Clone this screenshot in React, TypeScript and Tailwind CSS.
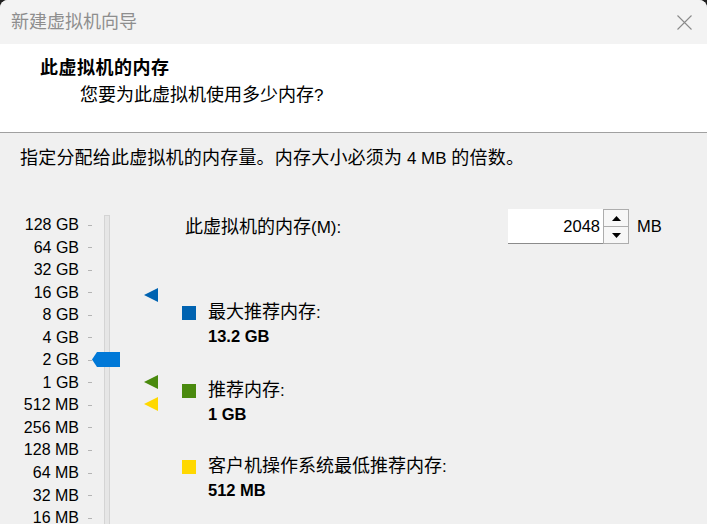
const labels = [
  "128 GB",
  "64 GB",
  "32 GB",
  "16 GB",
  "8 GB",
  "4 GB",
  "2 GB",
  "1 GB",
  "512 MB",
  "256 MB",
  "128 MB",
  "64 MB",
  "32 MB",
  "16 MB",
];

function Marker({ color, className }: { color: string; className: string }) {
  return (
    <svg width="14" height="14" viewBox="0 0 14 14" className={className}>
      <polygon points="0,7 14,0 14,14" fill={color} />
    </svg>
  );
}

function LegendItem({
  color,
  title,
  value,
  className,
}: {
  color: string;
  title: string;
  value: string;
  className?: string;
}) {
  return (
    <div className={`flex ${className ?? ""}`}>
      <div className="mt-[6px] w-[14px] h-[14px] shrink-0" style={{ background: color }} />
      <div className="ml-[12px] flex flex-col">
        <div className="leading-[24px] h-[24px]">
          <span className="text-[18px]">{title}</span>
          <span className="text-[17px]">:</span>
        </div>
        <div className="leading-[24px] h-[24px] text-[16.5px] font-bold">{value}</div>
      </div>
    </div>
  );
}

export default function App() {
  return (
    <div className="w-[707px] h-[524px] overflow-hidden bg-[#202020] font-['Liberation_Sans','Noto_Sans_CJK_SC',sans-serif] text-black">
      <div className="h-full rounded-t-[8px] overflow-hidden bg-[#f0f0f0] flex flex-col">
        {/* title bar */}
        <div className="h-[44px] shrink-0 bg-[#f3f3f3] flex items-center justify-between pl-[11px] pr-[15px]">
          <span className="text-[18px] text-[#8e8e8e] leading-none">新建虚拟机向导</span>
          <svg width="15" height="15" viewBox="0 0 15 15">
            <path d="M0.5 0.5L14.5 14.5M14.5 0.5L0.5 14.5" stroke="#8a8a8a" strokeWidth="1.1" />
          </svg>
        </div>

        {/* header */}
        <div className="h-[89px] shrink-0 bg-white border-b border-[#a0a0a0] pt-[12px]">
          <div className="pl-[40px] text-[18px] font-bold leading-[24px] tracking-[0.5px]">此虚拟机的内存</div>
          <div className="pl-[80px] text-[18px] leading-[24px] mt-[3px]">
            您要为此虚拟机使用多少内存<span className="text-[17px]">?</span>
          </div>
        </div>

        {/* body */}
        <div className="flex-1 flex flex-col">
          <div className="pt-[13px] pl-[20px] leading-[24px] h-[37px] whitespace-nowrap">
            <span className="text-[18px] tracking-[0.2px]">指定分配给此虚拟机的内存量。内存大小必须为</span>
            <span className="text-[17px]"> 4 MB </span>
            <span className="text-[18px] tracking-[0.2px]">的倍数。</span>
          </div>

          <div className="mt-[39px] flex items-start">
            {/* labels */}
            <div className="w-[79px] pt-[4.75px] flex flex-col">
              {labels.map((l) => (
                <div key={l} className="h-[22.55px] flex items-center justify-end text-[16px] leading-none whitespace-nowrap">
                  {l}
                </div>
              ))}
            </div>

            {/* slider */}
            <div className="relative w-[103px] h-[330px] shrink-0">
              <div className="pt-[4.75px] ml-[9px] flex flex-col">
                {labels.map((l) => (
                  <div key={l} className="h-[22.55px] flex items-center">
                    <div className="w-[4px] h-px bg-[#b4b4b4]" />
                  </div>
                ))}
              </div>
              <div className="absolute left-[25px] top-[6px] bottom-0 w-[6px] border border-[#d4d4d4] bg-[#e6e6e6]" />
              <svg width="28" height="15" viewBox="0 0 28 15" className="absolute left-[13px] top-[143px]">
                <polygon points="0,7.5 5,0 28,0 28,15 5,15" fill="#0078d7" />
              </svg>
              <Marker color="#0063b1" className="absolute left-[65px] top-[79px]" />
              <Marker color="#4a8a0e" className="absolute left-[65px] top-[166px]" />
              <Marker color="#ffd800" className="absolute left-[65px] top-[188px]" />
            </div>

            {/* right column */}
            <div className="flex flex-col flex-1">
              <div className="h-[35px] flex items-center">
                <div className="w-[326px] pl-[3px] leading-none whitespace-nowrap">
                  <span className="text-[18px]">此虚拟机的内存</span>
                  <span className="text-[17px]">(M):</span>
                </div>
                <div className="w-[95px] h-[35px] bg-white border-b border-[#8b8b8b] flex items-center justify-end pr-[3px] text-[16.5px]">
                  2048
                </div>
                <div className="w-[26px] h-[35px] flex flex-col border border-[#adadad] bg-[#f0f0f0]">
                  <div className="flex-1 flex items-center justify-center border-b border-[#adadad] bg-[#f7f7f7]">
                    <svg width="9" height="5" viewBox="0 0 9 5">
                      <polygon points="0,5 4.5,0 9,5" fill="#000" />
                    </svg>
                  </div>
                  <div className="flex-1 flex items-center justify-center bg-[#f7f7f7]">
                    <svg width="9" height="5" viewBox="0 0 9 5">
                      <polygon points="0,0 9,0 4.5,5" fill="#000" />
                    </svg>
                  </div>
                </div>
                <div className="ml-[8px] text-[16.5px] leading-none">MB</div>
              </div>

              <LegendItem color="#0063b1" title="最大推荐内存" value="13.2 GB" className="mt-[56px]" />
              <LegendItem color="#4a8a0e" title="推荐内存" value="1 GB" className="mt-[30px]" />
              <LegendItem color="#ffd800" title="客户机操作系统最低推荐内存" value="512 MB" className="mt-[28px]" />
            </div>
          </div>
        </div>
      </div>
    </div>
  );
}
